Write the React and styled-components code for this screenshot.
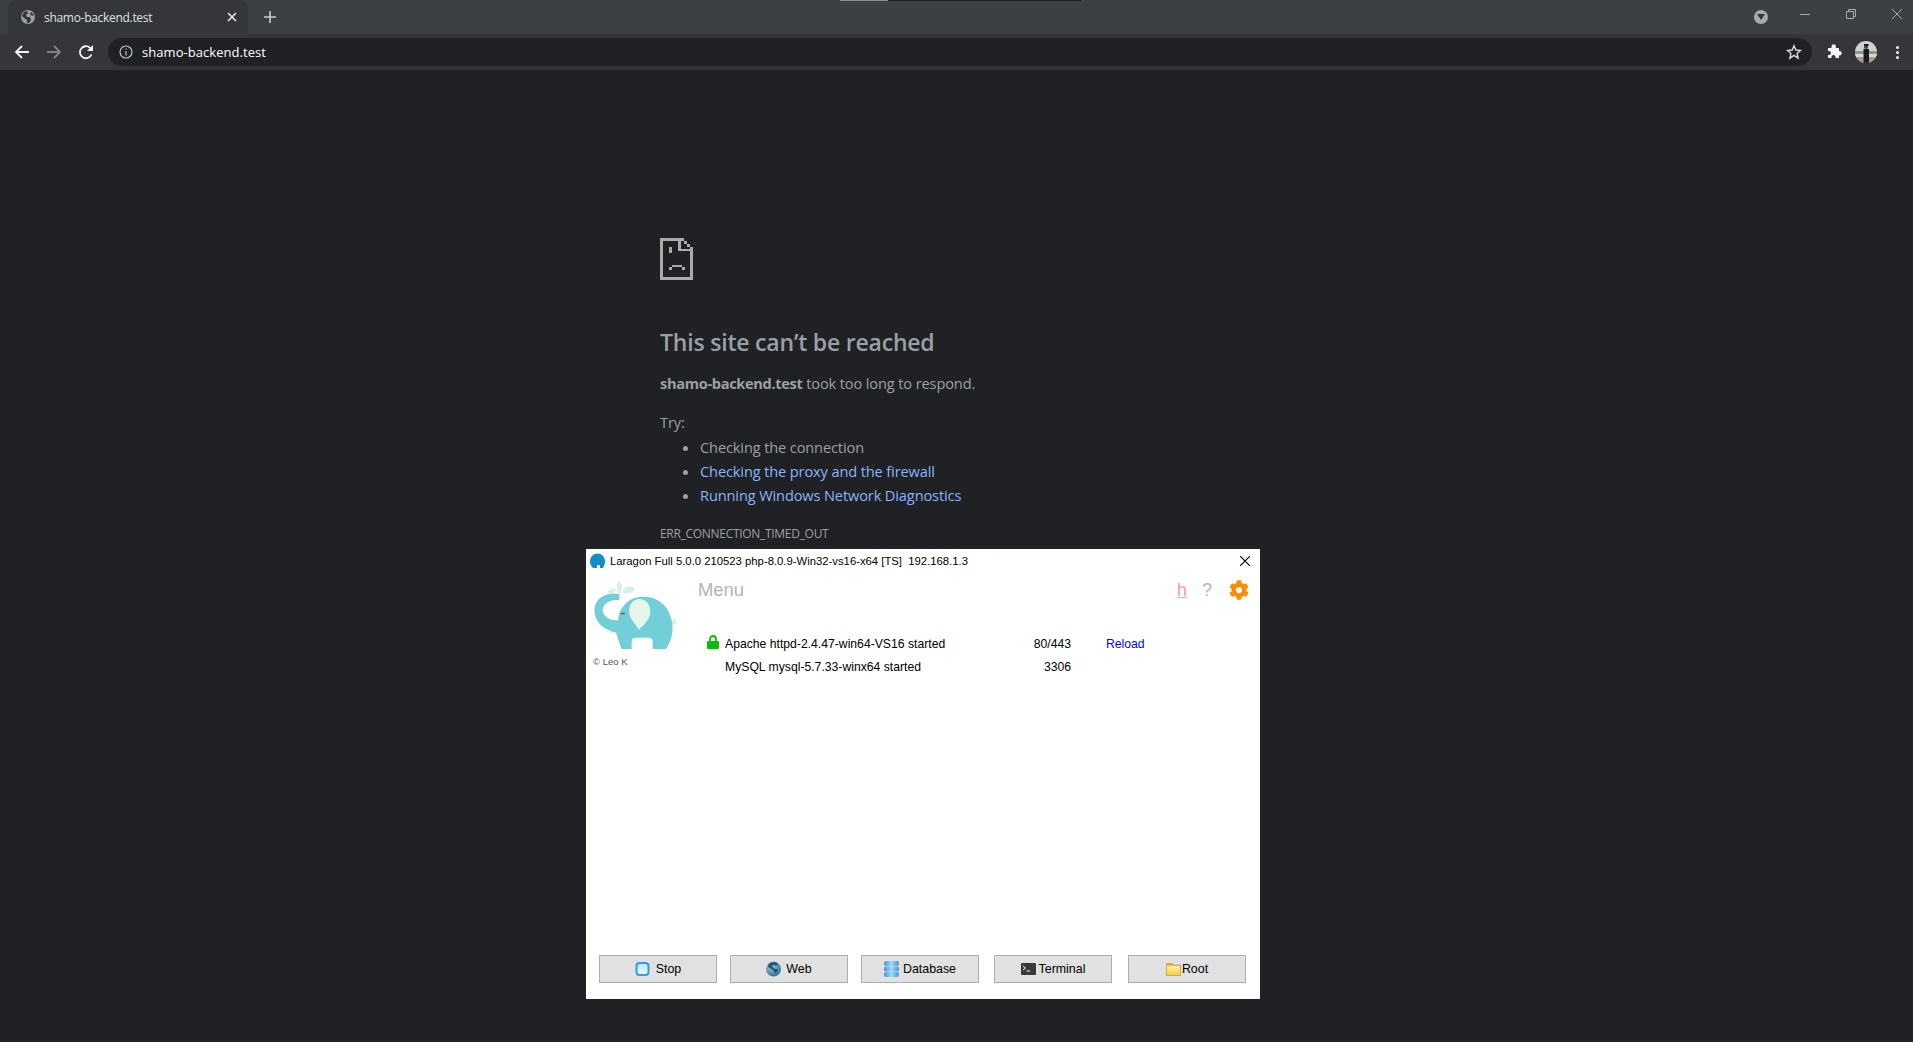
import React from 'react';
import styled, { createGlobalStyle } from 'styled-components';
import { FaCog } from 'react-icons/fa';

const GlobalStyle = createGlobalStyle`
	html, body {
		margin: 0;
		height: 100%;
		background: #202124;
		overflow: hidden;
	}
`;

const Browser = styled.div`
	position: relative;
	width: 1913px;
	height: 1042px;
	display: flex;
	flex-direction: column;
	background: #202124;
	font-family: 'Open Sans', 'Noto Sans', sans-serif;
`;

const TabStrip = styled.div`
	position: relative;
	height: 34px;
	display: flex;
	align-items: flex-end;
	padding-left: 8px;
	background: #3c4043;
`;

const SystemLine = styled.div`
	position: absolute;
	top: 0;
	left: 840px;
	width: 241px;
	height: 1px;
	background: linear-gradient(90deg, #8a8c8e 0 48px, #1c1d1f 48px);
`;

const Tab = styled.div`
	width: 240px;
	height: 34px;
	display: flex;
	align-items: center;
	padding: 0 10px 0 13px;
	box-sizing: border-box;
	background: #35363a;
	border-radius: 8px 8px 0 0;
	color: #dee1e6;
	font-size: 12px;
`;

const TabTitle = styled.span`
	flex: 1;
	margin-left: 9px;
	letter-spacing: -0.3px;
`;

const NewTab = styled.div`
	width: 34px;
	height: 34px;
	margin-left: 5px;
	display: flex;
	align-items: center;
	justify-content: center;
	color: #c7cacd;
`;

const WindowControls = styled.div`
	margin-left: auto;
	margin-right: -7px;
	height: 34px;
	display: flex;
	align-items: center;
`;

const ProfileDot = styled.div`
	width: 14px;
	height: 14px;
	margin-right: 14px;
	display: flex;
	align-items: center;
	justify-content: center;
	background: #a8aaac;
	border-radius: 50%;
`;

const ControlIcon = styled.svg`
	width: 46px;
	height: 30px;
	margin-bottom: 4px;
	fill: none;
	stroke: #a6a8aa;
	stroke-width: 1;
`;

const Toolbar = styled.div`
	height: 36px;
	display: flex;
	align-items: flex-start;
	padding: 4px 0 0 8px;
	box-sizing: border-box;
	background: #35363a;
`;

const NavButton = styled.div`
	width: 28px;
	height: 28px;
	margin-right: 4px;
	display: flex;
	align-items: center;
	justify-content: center;
`;

const Omnibox = styled.div`
	width: 1704px;
	height: 28px;
	flex: none;
	margin-left: 4px;
	padding: 0 10px 0 11px;
	box-sizing: border-box;
	display: flex;
	align-items: center;
	background: #202124;
	border-radius: 14px;
	color: #fff;
	font-size: 13px;
`;

const UrlText = styled.span`
	flex: 1;
	margin-left: 9px;
	letter-spacing: 0.05px;
`;

const ToolbarTools = styled.div`
	display: flex;
	align-items: center;
	height: 28px;
	margin-left: 14px;
`;

const Avatar = styled.svg`
	width: 22px;
	height: 22px;
	margin-left: 13px;
	border-radius: 50%;
`;

const Kebab = styled.div`
	margin-left: 19px;
	display: flex;
	flex-direction: column;
	gap: 2px;
`;

const Dot = styled.i`
	width: 3px;
	height: 3px;
	background: #f1f3f4;
	border-radius: 50%;
`;

const ErrorPage = styled.main`
	flex: 1;
	padding: 168px 0 0 660px;
	color: #9aa0a6;
	font-size: 14.6px;
	line-height: 20px;
	letter-spacing: -0.13px;
`;

const SadTab = styled.svg`
	display: block;
	width: 33px;
	height: 42px;
`;

const Heading = styled.h1`
	margin: 47px 0 0;
	color: #9aa0a6;
	font-size: 23px;
	line-height: 30px;
	font-weight: 600;
	letter-spacing: -0.2px;
`;

const Message = styled.p`
	margin: 16px 0 0;
`;

const HostName = styled.strong`
	letter-spacing: -0.33px;
`;

const TryLabel = styled.p`
	margin: 19px 0 0;
`;

const Suggestions = styled.ul`
	margin: 3px 0 0;
	padding-left: 40px;
	line-height: 24px;
`;

const SuggestionLink = styled.a`
	color: #8ab4f8;
`;

const ErrorCode = styled.div`
	margin-top: 19px;
	font-size: 12px;
	line-height: 16px;
	letter-spacing: -0.3px;
`;

const LaragonWindow = styled.section`
	position: absolute;
	left: 586px;
	top: 549px;
	width: 674px;
	height: 450px;
	display: flex;
	flex-direction: column;
	background: #fff;
	color: #000;
	font-family: 'Liberation Sans', Arial, sans-serif;
	font-size: 12.2px;
`;

const TitleBar = styled.header`
	height: 23px;
	flex: none;
	display: flex;
	align-items: center;
	padding-left: 4px;
	font-size: 11.3px;
`;

const TitleText = styled.span`
	flex: 1;
	margin-left: 5px;
	white-space: pre;
`;

const CloseIcon = styled.svg`
	width: 10px;
	height: 10px;
	margin-right: 10px;
	stroke: #000;
	stroke-width: 1.1;
`;

const WindowBody = styled.div`
	flex: 1;
	display: flex;
`;

const BrandColumn = styled.div`
	width: 108px;
	flex: none;
	padding: 3px 0 0 4px;
	box-sizing: border-box;
`;

const Elephant = styled.svg`
	display: block;
	width: 100px;
	height: 78px;
`;

const Copyright = styled.div`
	margin: 3px 0 0 3px;
	color: #555;
	font-size: 9.5px;
	line-height: 11px;
`;

const MainColumn = styled.div`
	flex: 1;
	display: flex;
	flex-direction: column;
`;

const MenuRow = styled.div`
	height: 24px;
	margin-top: 6px;
	padding: 0 11px 0 4px;
	display: flex;
	align-items: center;
`;

const MenuLabel = styled.span`
	flex: 1;
	color: #b4b4b4;
	font-size: 18.4px;
`;

const HelpLetter = styled.span`
	margin-right: 15px;
	color: ${(props) => props.color};
	font-size: 18px;
	text-decoration: ${(props) => (props.$underline ? 'underline' : 'none')};
`;

const Gear = styled(FaCog)`
	width: 20px;
	height: 20px;
	margin-left: 2px;
	color: #ff8c00;
`;

const Services = styled.div`
	margin-top: 32px;
	display: flex;
	flex-direction: column;
	gap: 3px;
`;

const ServiceRow = styled.div`
	height: 20px;
	display: grid;
	grid-template-columns: 18px 240px 106px auto;
	align-items: center;
	padding-left: 13px;
`;

const Lock = styled.svg`
	width: 12px;
	height: 14px;
	margin-top: -4px;
`;

const ServiceName = styled.span`
	white-space: pre;
`;

const Port = styled.span`
	text-align: right;
`;

const ReloadLink = styled.span`
	margin-left: 35px;
	color: #0000ff;
`;

const ButtonBar = styled.footer`
	height: 44px;
	flex: none;
	display: flex;
`;

const ToolButton = styled.button`
	width: 118px;
	height: 28px;
	margin-left: ${(props) => props.$before}px;
	padding: 0;
	display: flex;
	align-items: center;
	justify-content: center;
	gap: ${(props) => props.$gap}px;
	background: #e1e1e1;
	border: 1px solid #adadad;
	color: #000;
	font-family: 'Liberation Sans', Arial, sans-serif;
	font-size: 12.4px;
`;

const ButtonIcon = styled.svg`
	width: 15px;
	height: 16px;
	flex: none;
`;

const ElephantLogo = () => (
	<Elephant viewBox="0 0 300 234">
		{/* water spout */}
		<path d="M85 18C98 25 100 45 88 60 78 50 78 30 85 18ZM135 40C125 30 105 30 98 50 105 62 130 55 135 40ZM78 42C68 38 56 42 52 52 60 58 75 55 78 42Z" fill="#d6eff0" />
		{/* trunk and body */}
		<path
			d="M88 58C60 50 25 62 15 92 8 120 22 150 55 165 65 170 72 172 80 178 84 192 88 208 95 222L125 222 125 200Q125 188 137 188L176 188Q188 188 188 200L188 222 228 222C245 198 252 165 245 135 235 90 200 65 165 65 140 65 122 70 108 85 92 100 85 118 85 135 65 140 38 125 38 105 38 88 60 70 88 76Z"
			fill="#72cfd8"
		/>
		{/* ear */}
		<path d="M148 72C170 72 182 92 181 112 180 135 160 150 146 165 140 148 118 135 117 108 117 88 130 72 148 72Z" fill="#e6f7ea" />
		{/* eye */}
		<path d="M90 117C95 112 103 112 108 118L100 117 98 120 95 117Z" fill="#47666a" />
		{/* tusk and tail */}
		<path d="M50 165C60 170 72 172 82 172L72 178C62 176 55 172 50 165Z" fill="#eef4e8" />
		<path d="M246 142C252 144 256 138 252 130M246 142C252 150 258 146 258 140" stroke="#a5e0e4" strokeWidth="3" fill="none" />
	</Elephant>
);

const App = () => {
	return (
		<Browser>
			<GlobalStyle />
			<TabStrip>
				<SystemLine />
				<Tab>
					<svg width="14" height="14" viewBox="0 0 14 14">
						<circle cx="7" cy="7" r="7" fill="#9aa0a6" />
						<path d="M3 2 6 1 7 3 5 5 6 7 9 7 10 10 8 13 6 13 6 10 3 8 1 6ZM10 2 13 5 11 6 9 4Z" fill="#35363a" />
					</svg>
					<TabTitle>shamo-backend.test</TabTitle>
					<svg width="12" height="12" viewBox="0 0 12 12" stroke="#dee1e6" strokeWidth="1.7">
						<path d="m2 2 8 8m0-8-8 8" />
					</svg>
				</Tab>
				<NewTab>
					<svg width="12" height="12" viewBox="0 0 12 12" stroke="#c7cacd" strokeWidth="1.6">
						<path d="M6 0v12M0 6h12" />
					</svg>
				</NewTab>
				<WindowControls>
					<ProfileDot>
						<svg width="8" height="6" viewBox="0 0 8 6">
							<path d="M0 0h8L4 6Z" fill="#35363a" />
						</svg>
					</ProfileDot>
					<ControlIcon viewBox="0 0 46 30">
						<path d="M18 14.5h10" />
					</ControlIcon>
					<ControlIcon viewBox="0 0 46 30">
						<path d="M18.5 11.500h7v7h-7zM20.5 11.500v-2h7v7h-2" />
					</ControlIcon>
					<ControlIcon viewBox="0 0 46 30">
						<path d="m18 9 10 10m0-10-10 10" />
					</ControlIcon>
				</WindowControls>
			</TabStrip>
			<Toolbar>
				<NavButton>
					<svg width="16" height="16" viewBox="0 0 16 16" fill="none" stroke="#f1f3f4" strokeWidth="1.8">
						<path d="M15 8H2M8 2 2 8l6 6" />
					</svg>
				</NavButton>
				<NavButton>
					<svg width="16" height="16" viewBox="0 0 16 16" fill="none" stroke="#7f8286" strokeWidth="1.8">
						<path d="M1 8h13M8 2l6 6-6 6" />
					</svg>
				</NavButton>
				<NavButton>
					<svg width="16" height="16" viewBox="0 0 16 16" fill="none" stroke="#f1f3f4" strokeWidth="1.8">
						<path d="M13.5 10.5A6 6 0 1 1 12 3.8L14 6" />
						<path d="M15 1v6H9z" fill="#f1f3f4" stroke="none" />
					</svg>
				</NavButton>
				<Omnibox>
					<svg width="14" height="14" viewBox="0 0 14 14" fill="none" stroke="#bdc1c6" strokeWidth="1.2">
						<circle cx="7" cy="7" r="6" />
						<path d="M7 6v4.5M7 3.5v1.3" />
					</svg>
					<UrlText>shamo-backend.test</UrlText>
					<svg width="16" height="16" viewBox="0 0 16 16" fill="none" stroke="#dadce0" strokeWidth="1.4">
						<path d="m8 1.8 1.9 4.2 4.6.5-3.4 3.1 1 4.5L8 11.3l-4.1 2.8 1-4.5L1.500 6.500l4.600-.5Z" />
					</svg>
				</Omnibox>
				<ToolbarTools>
					<svg width="16" height="16" viewBox="0 0 16 16" fill="#f1f3f4">
						<path d="M5.500 2.500a2.200 2.200 0 0 1 4.400 0V4H13v3h.5a2.200 2.200 0 0 1 0 4.400H13V14H9.500v-1a2 2 0 0 0-4 0v1H2v-3h1a2 2 0 0 0 0-4H2V4h3.500Z" />
					</svg>
					<Avatar viewBox="0 0 22 22">
						<rect width="22" height="22" fill="#cfd2d0" />
						<rect y="10" width="22" height="3" fill="#8d9492" />
						<rect y="13" width="22" height="3" fill="#d9dad6" />
						<rect y="16" width="22" height="6" fill="#a39a8c" />
						<rect x="8.500" y="8" width="5.500" height="14" fill="#1c1c1e" />
						<circle cx="11" cy="6" r="2" fill="#4a3d36" />
						<rect x="9" y="3" width="4.500" height="2" fill="#1c1c1e" />
					</Avatar>
					<Kebab>
						<Dot />
						<Dot />
						<Dot />
					</Kebab>
				</ToolbarTools>
			</Toolbar>
			<ErrorPage>
				<SadTab viewBox="0 0 33 42" shapeRendering="crispEdges" fill="#ababab">
					<path d="M0 0h24v3H3v36h27V12h3v30H0ZM24 3h3v3h-3zM27 6h3v3h-3zM30 9h3v3h-3zM18 3h3v8h12v2H18ZM9 9h3v6H9zM12 27h10v2H12zM9 29h3v3H9zM22 29h3v3h-3z" />
				</SadTab>
				<Heading>This site can’t be reached</Heading>
				<Message>
					<HostName>shamo-backend.test</HostName> took too long to respond.
				</Message>
				<TryLabel>Try:</TryLabel>
				<Suggestions>
					<li>Checking the connection</li>
					<li>
						<SuggestionLink>Checking the proxy and the firewall</SuggestionLink>
					</li>
					<li>
						<SuggestionLink>Running Windows Network Diagnostics</SuggestionLink>
					</li>
				</Suggestions>
				<ErrorCode>ERR_CONNECTION_TIMED_OUT</ErrorCode>
			</ErrorPage>
			<LaragonWindow>
				<TitleBar>
					<svg width="15" height="15" viewBox="0 0 15 15">
						<path d="M0 8a7.500 7.500 0 0 1 15 0c0 3-1 5-2 7h-3v-3H7v3H3C1 13 0 11 0 8Z" fill="#0f8fc4" />
					</svg>
					<TitleText>Laragon Full 5.0.0 210523 php-8.0.9-Win32-vs16-x64 [TS]  192.168.1.3</TitleText>
					<CloseIcon viewBox="0 0 10 10">
						<path d="m0 0 10 10m0-10L0 10" />
					</CloseIcon>
				</TitleBar>
				<WindowBody>
					<BrandColumn>
						<ElephantLogo />
						<Copyright>© Leo K</Copyright>
					</BrandColumn>
					<MainColumn>
						<MenuRow>
							<MenuLabel>Menu</MenuLabel>
							<HelpLetter color="#ff9a9a" $underline>h</HelpLetter>
							<HelpLetter color="#b4b4b4">?</HelpLetter>
							<Gear />
						</MenuRow>
						<Services>
							<ServiceRow>
								<Lock viewBox="0 0 12 14">
									<path d="M3 6V4a3 3 0 0 1 6 0v2" fill="none" stroke="#0dbb0d" strokeWidth="1.800" />
									<rect y="6" width="12" height="8" rx="1" fill="#0dbb0d" />
								</Lock>
								<ServiceName>Apache httpd-2.4.47-win64-VS16 started</ServiceName>
								<Port>80/443</Port>
								<ReloadLink>Reload</ReloadLink>
							</ServiceRow>
							<ServiceRow>
								<span />
								<ServiceName>MySQL mysql-5.7.33-winx64 started</ServiceName>
								<Port>3306</Port>
							</ServiceRow>
						</Services>
					</MainColumn>
				</WindowBody>
				<ButtonBar>
					<ToolButton $before={13} $gap={6}>
						<ButtonIcon viewBox="0 0 15 16">
							<defs>
								<linearGradient id="stopFill" x1="0" y1="0" x2="0" y2="1">
									<stop offset="0" stopColor="#bfe3fb" />
									<stop offset="1" stopColor="#eef8ff" />
								</linearGradient>
							</defs>
							<rect x="1.500" y="2" width="12" height="12" rx="3" fill="url(#stopFill)" stroke="#2f9bf0" strokeWidth="2" />
						</ButtonIcon>
						Stop
					</ToolButton>
					<ToolButton $before={13} $gap={5}>
						<ButtonIcon viewBox="0 0 15 16">
							<defs>
								<radialGradient id="globeFill" cx="0.35" cy="0.3" r="0.8">
									<stop offset="0" stopColor="#a9cfe0" />
									<stop offset="1" stopColor="#1f6a8e" />
								</radialGradient>
							</defs>
							<circle cx="7.500" cy="8" r="7.500" fill="url(#globeFill)" />
							<path d="M5 1.500 9 1l3 2-2 2-2-1-2 1 2 2.500 4 1-2 4-3-3.500-5-3 .5-3Z" fill="#123f56" opacity=".8" />
						</ButtonIcon>
						Web
					</ToolButton>
					<ToolButton $before={13} $gap={4}>
						<ButtonIcon viewBox="0 0 15 16">
							<defs>
								<linearGradient id="dbFill" x1="0" y1="0" x2="1" y2="0">
									<stop offset="0" stopColor="#3f97dc" />
									<stop offset="0.5" stopColor="#a5d8f5" />
									<stop offset="1" stopColor="#3f97dc" />
								</linearGradient>
							</defs>
							<rect width="15" height="5" rx="2" fill="url(#dbFill)" />
							<rect y="5.500" width="15" height="5" rx="1.500" fill="url(#dbFill)" />
							<rect y="11" width="15" height="5" rx="2" fill="url(#dbFill)" />
						</ButtonIcon>
						Database
					</ToolButton>
					<ToolButton $before={15} $gap={3}>
						<ButtonIcon viewBox="0 0 15 16">
							<rect y="2" width="15" height="12" rx="1" fill="#3a3a3a" />
							<path d="m2 5 2.500 2L2 9M5.500 10H9" stroke="#fff" fill="none" />
						</ButtonIcon>
						Terminal
					</ToolButton>
					<ToolButton $before={16} $gap={1}>
						<ButtonIcon viewBox="0 0 15 16">
							<defs>
								<linearGradient id="folderFill" x1="0" y1="0" x2="0" y2="1">
									<stop offset="0" stopColor="#fdf0a8" />
									<stop offset="1" stopColor="#f6cf45" />
								</linearGradient>
							</defs>
							<path d="M.5 2.500h6l1 1.500h7v10.500H.5Z" fill="#e9b93a" stroke="#c9a227" strokeWidth=".8" />
							<rect x="1" y="5" width="13" height="9" fill="url(#folderFill)" />
						</ButtonIcon>
						Root
					</ToolButton>
				</ButtonBar>
			</LaragonWindow>
		</Browser>
	);
};

export default App;
